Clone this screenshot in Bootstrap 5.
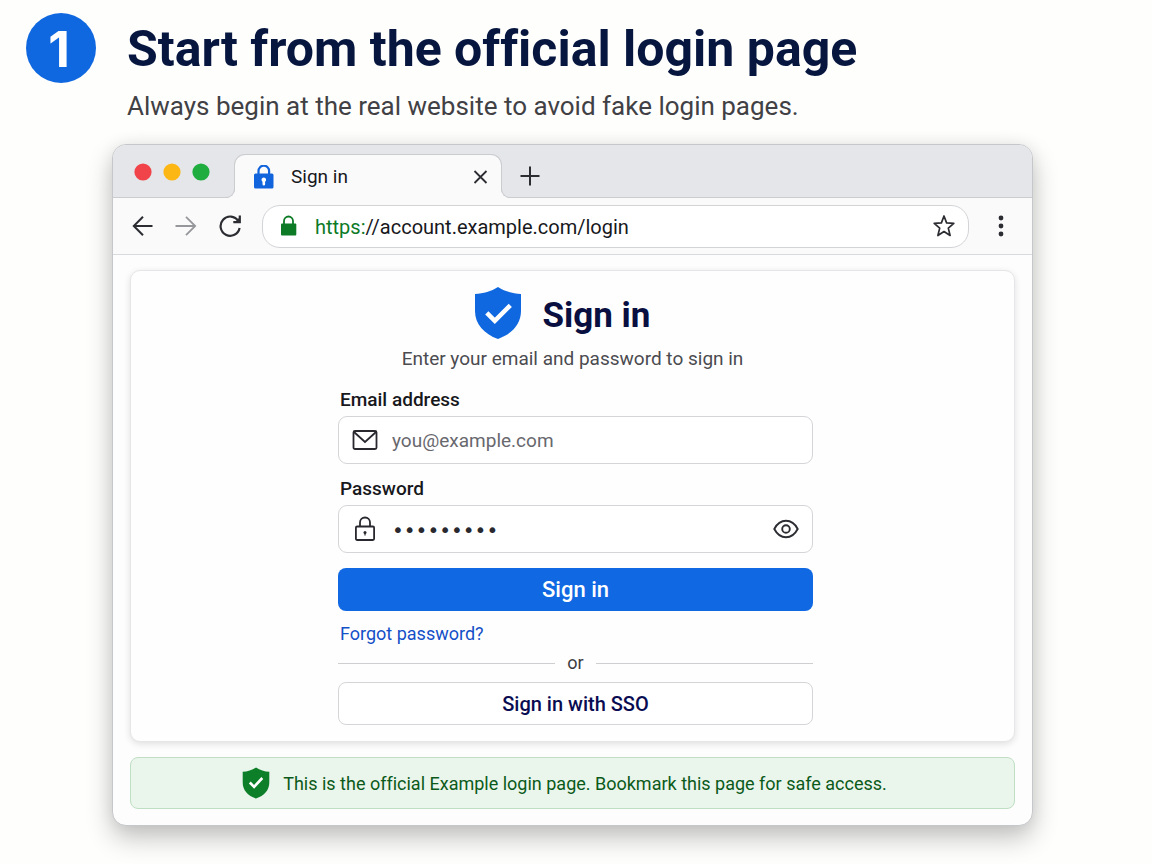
<!DOCTYPE html>
<html lang="en">
<head>
<meta charset="utf-8">
<meta name="viewport" content="width=device-width, initial-scale=1">
<title>Start from the official login page</title>
<link href="https://cdn.jsdelivr.net/npm/bootstrap@5.3.0/dist/css/bootstrap.min.css" rel="stylesheet">
<script src="https://cdn.jsdelivr.net/npm/bootstrap@5.3.0/dist/js/bootstrap.bundle.min.js" defer></script>
<style>
  body { font-family: Roboto, "Liberation Sans", sans-serif; font-variant-ligatures: none; background: #fefefd; color: #17181c; }
  .guide { padding: 13px 119px 38px 26px; }
  .step-dot { width: 70px; height: 70px; background: #1068e0; font: 700 50px/1 Inter, sans-serif; padding-right: 4px; padding-top: 2px; }
  .step-head { gap: 31px; }
  .step-title { font-size: 50px; line-height: 72px; font-weight: 700; color: #06163f; }
  .step-sub { font-size: 26px; line-height: 32px; margin-top: 5px; color: #414145; }
  .browser { margin: 22px 0 0 86px; border: 1px solid #c6c7ca; border-radius: 14px; background: #fdfdfd; box-shadow: 0 12px 26px rgba(0,0,0,.24), 0 0 16px rgba(0,0,0,.06); }
  .tab-strip { height: 53px; padding-left: 21px; background: #e5e6e9; border-bottom: 1px solid #cbccd0; border-radius: 13px 13px 0 0; }
  .lights { padding-top: 2px; }
  .site-tab { position: relative; width: 268px; height: 44px; margin: 0 0 -1px 23px; padding: 2px 13px 0 18px; background: #fafafb; border: 1px solid #cbccd0; border-bottom: 0; border-radius: 11px 11px 0 0; font-size: 19px; }
  .site-tab::before, .site-tab::after { content: ""; position: absolute; bottom: 0; width: 10px; height: 10px; border-bottom: 1px solid #cbccd0; }
  .site-tab::before { left: -10px; border-right: 1px solid #cbccd0; border-bottom-right-radius: 9px; box-shadow: 3px 3px 0 #fafafb; clip-path: inset(0 -1px -1px 0); }
  .site-tab::after { right: -10px; border-left: 1px solid #cbccd0; border-bottom-left-radius: 9px; box-shadow: -3px 3px 0 #fafafb; clip-path: inset(0 0 -1px -1px); }
  .plain-btn { display: inline-flex; padding: 0; border: 0; background: none; color: #2c2d32; }
  .new-tab { margin-left: 18px; padding-top: 10px; }
  .tool-row { height: 57px; padding: 0 18px 0 19px; background: #fafafb; border-bottom: 1px solid #d9dadd; }
  .nav-keys { gap: 21px; }
  .address { height: 43px; margin: 0 19px 0 20px; padding: 0 12px 0 16px; border: 1px solid #d3d4d7; border-radius: 18px; background: #fff; font-size: 20px; line-height: 24px; }
  .address-text { padding-top: 1px; }
  .secure { color: #0d7a26; }
  .page-area { padding: 15px 17px 16px; }
  .login-card { padding: 16px 0; border: 1px solid #e6e6e8; border-radius: 10px; background: #fefefe; box-shadow: 0 2px 7px rgba(0,0,0,.12); }
  .login-head { gap: 18px; padding-right: 22px; }
  .login-title { font-size: 35px; line-height: 46px; padding-top: 6px; font-weight: 700; color: #090f40; }
  .login-sub { font-size: 19px; line-height: 24px; margin: 8px 0 16px; color: #4b4b50; }
  .login-form { max-width: 481px; padding-left: 6px; }
  .field-label { font-size: 19px; line-height: 24px; margin: 0 0 4px 2px; padding-top: 1px; font-weight: 500; }
  .field-box { height: 48px; border: 1px solid #d5d5d9; border-radius: 9px; background: #fff; padding: 0 13px; margin-bottom: 12px; }
  .field-box .form-control { border: 0; background: none; padding: 2px 0 0 14px; font-size: 19px; line-height: 28px; box-shadow: none; color: #28282e; }
  .field-box .form-control::placeholder { color: #68686e; opacity: 1; }
  .field-box .secret { font-family: "DejaVu Sans", sans-serif; font-size: 20px; }
  .wide-btn { height: 43px; padding: 0; border-radius: 8px; font-size: 22px; line-height: 28px; font-weight: 500; }
  .go-btn, .go-btn:hover { background: #1068e3; color: #fff; border: 0; margin-top: 3px; }
  .sso-btn { background: #fff; border: 1px solid #d5d5d9; color: #0a0c52; font-size: 20px; }
  .forgot { font-size: 18px; line-height: 24px; margin: 11px 0 5px 2px; color: #1450c8; }
  .or-row { font-size: 18px; line-height: 24px; margin-bottom: 7px; gap: 12px; color: #3d3d42; }
  .or-line { height: 1px; background: #cfcfd2; }
  .safe-note { height: 52px; margin: 15px 0 0; border: 1px solid #bfdfc4; border-radius: 8px; background: #eaf5eb; color: #0b5a1a; font-size: 18px; gap: 13px; }
</style>
</head>
<body>
<main class="guide">
  <header class="d-flex step-head">
    <div class="step-dot rounded-circle text-white d-flex align-items-center justify-content-center flex-shrink-0">1</div>
    <div>
      <h1 class="step-title mb-0">Start from the official login page</h1>
      <p class="step-sub mb-0">Always begin at the real website to avoid fake login pages.</p>
    </div>
  </header>

  <section class="browser">
    <div class="tab-strip d-flex align-items-end">
      <div class="lights d-flex align-self-center">
        <svg width="77" height="18" viewBox="0 0 77 18" aria-hidden="true"><circle cx="9" cy="9" r="8.6" fill="#f0444a"/><circle cx="38" cy="9" r="8.6" fill="#fcb714"/><circle cx="67" cy="9" r="8.6" fill="#1fad40"/></svg>
      </div>
      <div class="site-tab d-flex align-items-center">
        <svg width="22" height="26" viewBox="0 0 22 26" aria-hidden="true"><path d="M5.500 9V6a5.300 5.300 0 0 1 10.600 0v3" fill="none" stroke="#1264dc" stroke-width="2.200"/><rect x="1" y="8.500" width="19.500" height="15" rx="1.500" fill="#1264dc"/><path d="M10.800 12.500a2.300 2.300 0 0 1 1.300 4.200v2.500a1.300 1.300 0 0 1-2.600 0v-2.500a2.300 2.300 0 0 1 1.300-4.200z" fill="#fff"/></svg>
        <span class="ms-3 me-auto">Sign in</span>
        <button type="button" class="plain-btn" aria-label="Close tab"><svg width="15" height="15" viewBox="0 0 15 15"><path d="M1.500 1l12 12M13.500 1l-12 12" stroke="currentColor" stroke-width="1.800"/></svg></button>
      </div>
      <button type="button" class="plain-btn new-tab align-self-center" aria-label="New tab"><svg width="20" height="20" viewBox="0 0 20 20"><path d="M10 .5v19M.5 10h19" stroke="currentColor" stroke-width="2"/></svg></button>
    </div>

    <div class="tool-row d-flex align-items-center">
      <div class="nav-keys d-flex align-items-center">
        <button type="button" class="plain-btn" aria-label="Back"><svg width="22" height="22" viewBox="0 0 22 22"><path d="M20.500 11H2M11 1.800L1.800 11l9.200 9.200" fill="none" stroke="currentColor" stroke-width="2"/></svg></button>
        <button type="button" class="plain-btn" aria-label="Forward"><svg width="22" height="22" viewBox="0 0 22 22"><path d="M.5 11h19M11 1.800l9.200 9.200-9.200 9.200" fill="none" stroke="#96979b" stroke-width="1.800"/></svg></button>
        <button type="button" class="plain-btn" aria-label="Reload"><svg width="24" height="24" viewBox="0 0 24 24"><path d="M20.300 7A9.600 9.600 0 1 0 21.600 14" fill="none" stroke="currentColor" stroke-width="2.200"/><path d="M21.800 1.500v6.700h-6.500" fill="none" stroke="currentColor" stroke-width="2.200"/><path d="M21 4v3.500h-3.500z" fill="currentColor"/></svg></button>
      </div>
      <div class="address d-flex align-items-center flex-grow-1">
        <svg width="20" height="22" viewBox="0 0 20 22" aria-hidden="true"><path d="M5 9V6a4.500 4.500 0 0 1 9 0v3" fill="none" stroke="#0d7a26" stroke-width="1.800"/><rect x="2" y="8.500" width="15.300" height="12" rx="1" fill="#0d7a26"/></svg>
        <span class="address-text ms-3"><span class="secure">https:</span>//account.example.com/login</span>
        <button type="button" class="plain-btn ms-auto" aria-label="Bookmark this page"><svg width="24" height="24" viewBox="0 0 24 24"><path d="M12 2l2.600 6.900 7.200.5-5.500 4.700 1.800 7.400-6.100-4-6.100 4 1.800-7.400-5.500-4.700 7.200-.5z" fill="none" stroke="currentColor" stroke-width="1.700" stroke-linejoin="round"/></svg></button>
      </div>
      <button type="button" class="plain-btn" aria-label="Menu"><svg width="26" height="24" viewBox="0 0 26 24"><g fill="currentColor"><circle cx="13" cy="4" r="2.400"/><circle cx="13" cy="12" r="2.400"/><circle cx="13" cy="20" r="2.400"/></g></svg></button>
    </div>

    <div class="page-area">
      <div class="login-card">
        <div class="login-head d-flex align-items-center justify-content-center">
          <svg width="52" height="52" viewBox="0 0 52 52" aria-hidden="true"><path d="M26 0c7 4.500 14.500 6.500 23 7v17c0 13-9 23-23 28C12 47 3 37 3 24V7c8.500-.5 16-2.500 23-7z" fill="#1068e0"/><path d="M14.800 25.800l8 8 15.500-15.500" fill="none" stroke="#fff" stroke-width="4.500"/></svg>
          <h2 class="login-title mb-0">Sign in</h2>
        </div>
        <p class="login-sub text-center">Enter your email and password to sign in</p>

        <form class="login-form mx-auto" onsubmit="return false">
          <label for="email" class="field-label d-block">Email address</label>
          <div class="field-box d-flex align-items-center">
            <svg class="flex-shrink-0" width="26" height="22" viewBox="0 0 26 22" aria-hidden="true"><rect x="1.500" y="2" width="23" height="18" rx="1.500" fill="none" stroke="#28282e" stroke-width="1.800"/><path d="M2 3l11 10L24 3" fill="none" stroke="#28282e" stroke-width="1.800"/></svg>
            <input type="email" id="email" class="form-control" placeholder="you@example.com">
          </div>
          <label for="password" class="field-label d-block">Password</label>
          <div class="field-box d-flex align-items-center">
            <svg class="flex-shrink-0" width="26" height="28" viewBox="0 0 26 28" aria-hidden="true"><path d="M8 11.500V7.500a5 5 0 0 1 10 0v4" fill="none" stroke="#28282e" stroke-width="1.800"/><rect x="3.900" y="11.500" width="18.200" height="13.500" rx="1.200" fill="none" stroke="#28282e" stroke-width="1.800"/><circle cx="13" cy="17.500" r="1.500" fill="#28282e"/><path d="M13 18v2.500" stroke="#28282e" stroke-width="1.200"/></svg>
            <input type="password" id="password" class="form-control secret" value="example12">
            <button type="button" class="plain-btn" aria-label="Show password"><svg width="26" height="20" viewBox="0 0 26 20"><path d="M1.300 10C4 4.800 8.200 1.800 13 1.800S22 4.800 24.700 10C22 15.200 17.800 18.200 13 18.200S4 15.200 1.300 10z" fill="none" stroke="currentColor" stroke-width="1.900"/><circle cx="13" cy="10" r="3.800" fill="none" stroke="currentColor" stroke-width="1.900"/></svg></button>
          </div>
          <button type="submit" class="btn wide-btn go-btn w-100">Sign in</button>
          <a href="#" class="forgot d-table text-decoration-none">Forgot password?</a>
          <div class="or-row d-flex align-items-center"><div class="or-line flex-grow-1"></div>or<div class="or-line flex-grow-1"></div></div>
          <button type="button" class="btn wide-btn sso-btn w-100">Sign in with SSO</button>
        </form>
      </div>

      <div class="safe-note d-flex align-items-center justify-content-center pe-3" role="status">
        <svg width="28" height="32" viewBox="0 0 28 32" aria-hidden="true"><path d="M14 .5c4 2.700 8.500 4 13.300 4.300v10.500c0 8-5 13.500-13.300 16.200C5.700 28.800.7 23.300.7 15.300V4.800C5.500 4.500 10 3.200 14 .5z" fill="#0d7f28"/><path d="M7.800 15.500l4.300 4.300 8.200-8.800" fill="none" stroke="#fff" stroke-width="2.600"/></svg>
        <span>This is the official Example login page. Bookmark this page for safe access.</span>
      </div>
    </div>
  </section>
</main>
</body>
</html>
